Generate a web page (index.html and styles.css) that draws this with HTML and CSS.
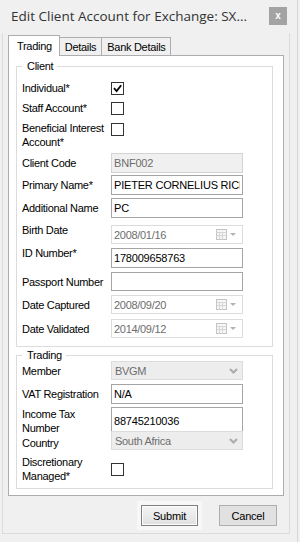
FILE: index.html
```html
<!DOCTYPE html>
<html lang="en">
<head>
<meta charset="UTF-8">
<title>Edit Client Account</title>
<link rel="stylesheet" href="styles.css">
</head>
<body>

<div class="window">

    <!-- TITLE BAR -->
    <div class="titlebar">
        <span class="title">Edit Client Account for Exchange: SX...</span>
        <button class="close">x</button>
    </div>

    <div class="panel">

        <!-- TABS -->
        <div class="tabs">
            <div class="tab active">Trading</div>
            <div class="tab">Details</div>
            <div class="tab">Bank Details</div>
        </div>

        <div class="page">

            <!-- CLIENT -->
            <fieldset class="group client">
                <legend>Client</legend>

                <div class="row row-check">
                    <label>Individual*</label>
                    <span class="check">
                        <svg width="11" height="11" viewBox="0 0 11 11"><path d="M2 5.2l2.6 2.8L9.2 2.2" stroke="#000" stroke-width="1.8" fill="none"/></svg>
                    </span>
                </div>
                <div class="row row-check mt6">
                    <label>Staff Account*</label>
                    <span class="check"></span>
                </div>
                <div class="row row-tall mt6">
                    <label>Beneficial Interest Account*</label>
                    <span class="check check-top"></span>
                </div>
                <div class="row mt4">
                    <label>Client Code</label>
                    <input class="input disabled" type="text" value="BNF002" readonly>
                </div>
                <div class="row mt2">
                    <label>Primary Name*</label>
                    <input class="input" type="text" value="PIETER CORNELIUS RICHTER">
                </div>
                <div class="row mt3">
                    <label>Additional Name</label>
                    <input class="input" type="text" value="PC">
                </div>
                <div class="row row-pick mt7">
                    <label class="lbl-top">Birth Date</label>
                    <div class="picker">
                        <span>2008/01/16</span>
                        <svg width="21" height="11" viewBox="0 0 21 11"><rect x="0.5" y="0.5" width="10" height="10" fill="#f6f6f6" stroke="#c4c4c4"/><path d="M0.5 3.5h10M0.5 6.5h10M3.5 3.5v7M6.5 3.5v7" stroke="#d6d6d6"/><path d="M14 4h6l-3 3z" fill="#b4b4b4"/></svg>
                    </div>
                </div>
                <div class="row mt4">
                    <label class="lbl-top">ID Number*</label>
                    <input class="input" type="text" value="178009658763">
                </div>
                <div class="row row-pick mt4">
                    <label>Passport Number</label>
                    <input class="input" type="text" value="">
                </div>
                <div class="row row-pick mt4">
                    <label>Date Captured</label>
                    <div class="picker">
                        <span>2008/09/20</span>
                        <svg width="21" height="11" viewBox="0 0 21 11"><rect x="0.5" y="0.5" width="10" height="10" fill="#f6f6f6" stroke="#c4c4c4"/><path d="M0.5 3.5h10M0.5 6.5h10M3.5 3.5v7M6.5 3.5v7" stroke="#d6d6d6"/><path d="M14 4h6l-3 3z" fill="#b4b4b4"/></svg>
                    </div>
                </div>
                <div class="row row-pick mt5">
                    <label>Date Validated</label>
                    <div class="picker">
                        <span>2014/09/12</span>
                        <svg width="21" height="11" viewBox="0 0 21 11"><rect x="0.5" y="0.5" width="10" height="10" fill="#f6f6f6" stroke="#c4c4c4"/><path d="M0.5 3.5h10M0.5 6.5h10M3.5 3.5v7M6.5 3.5v7" stroke="#d6d6d6"/><path d="M14 4h6l-3 3z" fill="#b4b4b4"/></svg>
                    </div>
                </div>
            </fieldset>

            <!-- TRADING -->
            <fieldset class="group trading">
                <legend>Trading</legend>

                <div class="row row-pick">
                    <label>Member</label>
                    <div class="combo">
                        <span>BVGM</span>
                        <svg width="9" height="6" viewBox="0 0 9 6"><path d="M1 1l3.5 3.5L8 1" stroke="#ababab" stroke-width="2" fill="none"/></svg>
                    </div>
                </div>
                <div class="row mt4">
                    <label>VAT Registration</label>
                    <input class="input" type="text" value="N/A">
                </div>
                <div class="row mt3">
                    <label>Income Tax Number</label>
                    <input class="input" type="text" value="88745210036">
                </div>
                <div class="row row-pick mt4">
                    <label class="lbl-low">Country</label>
                    <div class="combo">
                        <span>South Africa</span>
                        <svg width="9" height="6" viewBox="0 0 9 6"><path d="M1 1l3.5 3.5L8 1" stroke="#ababab" stroke-width="2" fill="none"/></svg>
                    </div>
                </div>
                <div class="row row-tall mt5">
                    <label>Discretionary Managed*</label>
                    <span class="check"></span>
                </div>
            </fieldset>

        </div>

        <!-- BUTTONS -->
        <div class="buttons">
            <button class="btn default">Submit</button>
            <button class="btn cancel">Cancel</button>
        </div>

    </div>
</div>

</body>
</html>
```

FILE: styles.css
```css
* {
    margin: 0;
    padding: 0;
    box-sizing: border-box;
}

html, body {
    width: 300px;
    height: 542px;
    background: #f0f0f0;
    color: #000;
    font-family: "Liberation Sans", Arial, sans-serif;
    font-size: 11px;
    letter-spacing: -0.3px;
    overflow: hidden;
}

/* =======================
     WINDOW
======================== */
.window {
    width: 298px;
    height: 542px;
    border-right: 1px solid #d6d6d6;
}

.titlebar {
    height: 33px;
    display: flex;
    justify-content: space-between;
    align-items: flex-start;
    padding: 7px 10px 0 11px;
}

.title {
    font-family: "Open Sans", "Liberation Sans", sans-serif;
    font-size: 13.5px;
    line-height: 18px;
    letter-spacing: 0;
    color: #333;
}

.close {
    width: 18px;
    height: 18px;
    border: none;
    background: #a3a3a3;
    color: #fff;
    font-family: "Liberation Sans", Arial, sans-serif;
    font-size: 10px;
    font-weight: bold;
    line-height: 16px;
}

.panel {
    width: 288px;
    height: 501px;
    margin-left: 2px;
    border: 1px solid #dcdcdc;
    border-top: none;
    padding: 0 5px;
}

/* =======================
     TABS
======================== */
.tabs {
    display: flex;
    align-items: flex-end;
    height: 22px;
}

.tab {
    height: 18px;
    padding: 2px 5px 0;
    margin-left: -1px;
    line-height: 14px;
    border: 1px solid #adadad;
    border-bottom: none;
    background: #f0f0f0;
}

.tab.active {
    height: 21px;
    margin-left: 0;
    margin-bottom: -1px;
    padding: 3px 7px 0 8px;
    background: #fff;
    position: relative;
    z-index: 1;
}

.page {
    background: #fff;
    border: 1px solid #adadad;
    padding: 4px 10px 6px 7px;
}

/* =======================
     GROUP BOXES
======================== */
.group {
    border: 1px solid #dcdcdc;
    padding: 9px 0 8px 5px;
    min-width: 0;
}

.group legend {
    padding: 0 4px 0 5px;
    line-height: 12px;
}

.trading {
    margin-top: 2px;
    padding: 0 0 5px 5px;
}

/* =======================
     ROWS
======================== */
.row {
    display: grid;
    grid-template-columns: 89px 132px;
    align-items: center;
    height: 20px;
}

.row label {
    line-height: 14px;
}

.row-check { height: 14px; }
.row-pick  { height: 19px; }
.row-tall  { height: 28px; }

.mt2 { margin-top: 2px; }
.mt3 { margin-top: 3px; }
.mt4 { margin-top: 4px; }
.mt5 { margin-top: 5px; }
.mt6 { margin-top: 6px; }
.mt7 { margin-top: 7px; }

.lbl-top {
    align-self: start;
    margin-top: -2px;
}

.lbl-low {
    align-self: end;
}

/* =======================
     CONTROLS
======================== */
.check {
    width: 13px;
    height: 13px;
    border: 1px solid #333;
    background: #fff;
    display: flex;
    align-items: center;
    justify-content: center;
}

.check-top {
    align-self: start;
    margin-top: 2px;
}

.input {
    width: 132px;
    height: 100%;
    border: 1px solid #a5a5a5;
    padding: 0 2px;
    font-family: inherit;
    font-size: 11px;
    letter-spacing: -0.2px;
    color: #000;
    background: #fff;
    outline: none;
}

.input.disabled {
    background: #f0f0f0;
    border-color: #d3d3d3;
    color: #6d6d6d;
}

.picker,
.combo {
    height: 100%;
    display: flex;
    align-items: center;
    justify-content: space-between;
    border: 1px solid #dcdcdc;
    color: #6d6d6d;
}

.picker {
    background: #fff;
    padding: 0 5px 0 2px;
}

.combo {
    background: #ededed;
    padding: 0 4px 0 3px;
}

/* =======================
     BUTTONS
======================== */
.buttons {
    display: flex;
    justify-content: flex-end;
    gap: 21px;
    margin-top: 9px;
    padding-right: 7px;
}

.btn {
    height: 21px;
    font-family: inherit;
    font-size: 11px;
    letter-spacing: -0.2px;
    color: #000;
    border: 1px solid #adadad;
    background: #e1e1e1;
}

.btn.default {
    width: 57px;
    border-color: #7f7f7f;
    background: linear-gradient(#f4f4f4, #e0e0e0);
    box-shadow: inset 0 0 0 1px #fcfcfc, 0 0 0 4px #f7f7f7;
}

.btn.cancel {
    width: 58px;
}
```
